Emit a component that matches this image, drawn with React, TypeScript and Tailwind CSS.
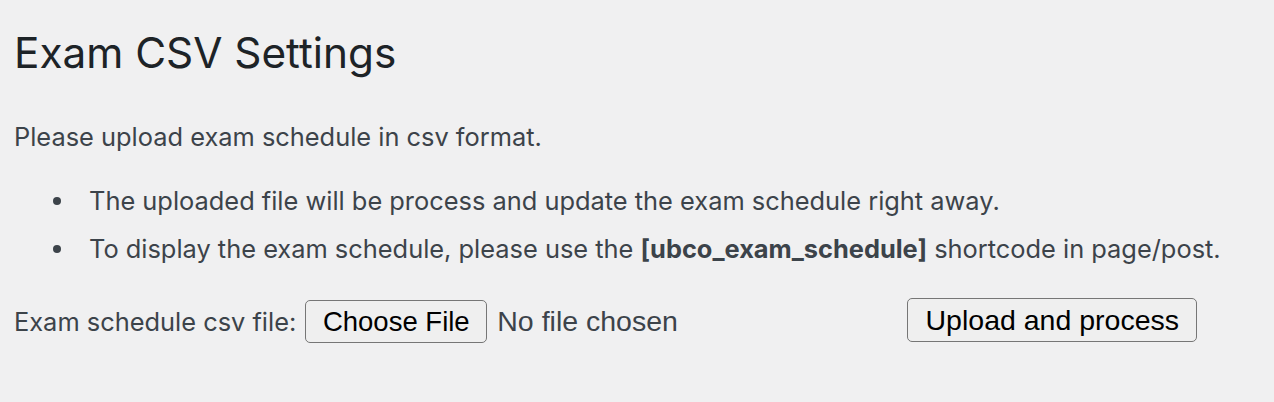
export default function App() {
  return (
    <div className="min-h-[402px] w-full bg-[#f0f0f1] px-[14px] pt-[26px] text-[#3c434a] [font-family:Inter,'Noto_Sans',sans-serif]">
      <h1 className="text-[42.3px] leading-[54px] font-normal text-[#1d2327]">Exam CSV Settings</h1>
      <p className="mt-[40px] text-[25.4px] leading-[34px]">Please upload exam schedule in csv format.</p>
      <ul className="mt-[30px] pl-[39px] text-[25.4px] leading-[34px]">
        {[
          <>The uploaded file will be process and update the exam schedule right away.</>,
          <>
            To display the exam schedule, please use the <strong className="font-bold">[ubco_exam_schedule]</strong> shortcode in page/post.
          </>,
        ].map((item, i) => (
          <li key={i} className={`flex items-center ${i === 0 ? 'mb-[14px]' : ''}`}>
            <span className="mr-[28px] h-[8px] w-[8px] shrink-0 rounded-full bg-[#3c434a]" />
            <span>{item}</span>
          </li>
        ))}
      </ul>
      <form className="mt-[32px] flex items-center">
        <label className="text-[25.4px] leading-[34px]">Exam schedule csv file:</label>
        <div className="ml-[9px] flex w-[602px] items-center [font-family:'Liberation_Sans',Arial,sans-serif]">
          <button
            type="button"
            className="h-[43px] w-[182px] rounded-[5px] border border-[#767676] bg-[#efefef] text-[27.5px] leading-none text-black"
          >
            Choose File
          </button>
          <span className="ml-[10px] text-[28.5px] leading-none text-[#3c434a]">No file chosen</span>
        </div>
        <button
          type="button"
          className="mb-[3px] h-[44px] w-[290px] rounded-[5px] border border-[#767676] bg-[#efefef] text-[28.5px] leading-none text-black [font-family:'Liberation_Sans',Arial,sans-serif]"
        >
          Upload and process
        </button>
      </form>
    </div>
  );
}
